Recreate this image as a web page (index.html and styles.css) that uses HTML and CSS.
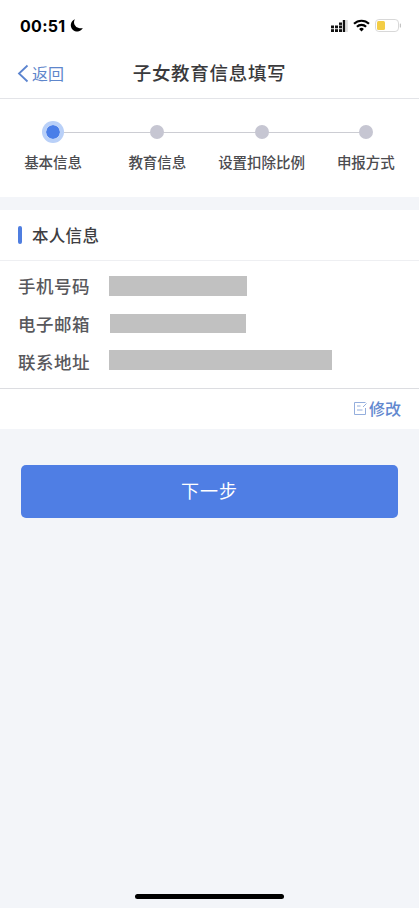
FILE: index.html
```html
<!DOCTYPE html>
<html lang="zh-CN">
<head>
<meta charset="utf-8">
<title>子女教育信息填写</title>
<link rel="stylesheet" href="styles.css">
</head>
<body>
<div class="page">
  <div class="status">
    <div class="time"><span>00:51</span>
      <svg class="moon" width="13" height="13" viewBox="0 0 13 13"><path d="M4.900 .3A6.300 6.300 0 1 0 12.800 8.900 7 7 0 0 1 8.800 9 5.800 5.800 0 0 1 4.900 .3Z" fill="#000"/></svg>
    </div>
    <div class="status-icons">
      <svg class="signal" width="17" height="12" viewBox="0 0 17 12"><g fill="#111"><rect x="0" y="5.500" width="3" height="2.800"/><rect x="0" y="9.200" width="3" height="2.800"/><rect x="4" y="5.500" width="3" height="2.800"/><rect x="4" y="9.200" width="3" height="2.800"/><rect x="8" y="2.500" width="3" height="2.400"/><rect x="8" y="5.500" width="3" height="2.800"/><rect x="8" y="9.200" width="3" height="2.800"/><rect x="11.800" y="0" width="2.400" height="12"/></g><rect x="15" y="0" width="1.800" height="12" fill="#ddd"/></svg>
      <svg width="17" height="13" viewBox="0 0 17 13"><g fill="none" stroke="#000" stroke-width="2.100"><path d="M1 4.800A10.600 10.600 0 0 1 16 4.800"/><path d="M3.900 7.800A6.400 6.400 0 0 1 13.100 7.800"/></g><path d="M6.100 9.900A3.400 3.400 0 0 1 10.900 9.900L8.500 12.500Z" fill="#000"/></svg>
      <svg width="26" height="13" viewBox="0 0 26 13"><rect x=".5" y=".5" width="23" height="12" rx="3.400" fill="#fff" stroke="#d8d8d8"/><rect x="2" y="2" width="8" height="9" rx="1.500" fill="#f3cd45"/><rect x="24.800" y="4.500" width="1.200" height="4" rx=".6" fill="#c4c4c4"/></svg>
    </div>
  </div>

  <header class="nav">
    <a class="back">
      <svg width="13" height="19" viewBox="0 0 13 19"><path d="M11.500 1.500 3 9.500l8.500 8" fill="none" stroke="#5b84cf" stroke-width="1.800"/></svg>
      <span>返回</span>
    </a>
    <h1 class="nav-title">子女教育信息填写</h1>
  </header>

  <section class="stepper">
    <div class="step active"><i class="dot"></i><span>基本信息</span></div>
    <div class="step"><i class="dot"></i><span>教育信息</span></div>
    <div class="step"><i class="dot"></i><span>设置扣除比例</span></div>
    <div class="step"><i class="dot"></i><span>申报方式</span></div>
  </section>

  <section class="card">
    <h2 class="card-title">本人信息</h2>
    <div class="rows">
      <div class="row"><span class="label">手机号码</span><i class="mask mask-phone"></i></div>
      <div class="row"><span class="label">电子邮箱</span><i class="mask mask-mail"></i></div>
      <div class="row"><span class="label">联系地址</span><i class="mask mask-addr"></i></div>
    </div>
    <div class="edit-row">
      <svg width="15" height="15" viewBox="0 0 15 15"><path d="M12.500 1.500H1.500V13.500H12.500V7M4 5H7.500M4 9H9.500M13.500 2.500 10 6" fill="none" stroke="#94aedd" stroke-width="1"/></svg>
      <span>修改</span>
    </div>
  </section>

  <button class="next">下一步</button>

  <div class="home"></div>
</div>
</body>
</html>
```
FILE: styles.css
```css
* { box-sizing: border-box; }
html, body { margin: 0; padding: 0; }
body {
  width: 419px;
  height: 908px;
  overflow: hidden;
  background: #f3f5f9;
  font-family: "Noto Sans CJK SC", "Noto Sans", sans-serif;
}
.page {
  height: 908px;
  display: flex;
  flex-direction: column;
}
.status {
  height: 50px;
  background: #fff;
  display: flex;
  justify-content: space-between;
  align-items: center;
  padding: 1px 18px 0 20px;
}
.time {
  display: flex;
  align-items: center;
  gap: 4px;
  font: 700 16px/20px Inter, sans-serif;
  letter-spacing: .3px;
  color: #000;
}
.status-icons {
  display: flex;
  align-items: center;
  gap: 5px;
}
.nav {
  height: 49px;
  background: #fff;
  border-bottom: 1px solid #e3e4e8;
  display: grid;
  grid-template-columns: 1fr auto 1fr;
  align-items: center;
  padding: 0 16px 2px;
}
.back {
  grid-column: 1;
  display: flex;
  align-items: center;
  gap: 3px;
  color: #5e86cb;
  font-size: 16px;
  line-height: 20px;
}
.nav-title {
  grid-column: 2;
  margin: 0 0 2px;
  font-size: 18.500px;
  font-weight: 500;
  line-height: 24px;
  letter-spacing: .7px;
  color: #3a3a3c;
}
.stepper {
  height: 98px;
  background: #fff;
  display: flex;
  padding: 23px 1px 0;
}
.step {
  flex: 1;
  position: relative;
  display: flex;
  flex-direction: column;
  align-items: center;
  gap: 10px;
}
.step:not(:last-child)::before {
  content: "";
  position: absolute;
  top: 10px;
  left: 50%;
  width: 100%;
  height: 1px;
  background: #cccdd3;
}
.dot {
  position: relative;
  width: 20px;
  height: 20px;
  padding: 3px;
  background-clip: content-box;
  background-color: #c6c6d2;
  border-radius: 50%;
}
.active .dot {
  width: 22px;
  height: 22px;
  margin: -1px;
  padding: 4px;
  background-color: #4a7ee8;
  box-shadow: inset 0 0 0 4px #b9d0f8;
}
.step span {
  font-size: 14.500px;
  font-weight: 500;
  line-height: 20px;
  color: #4c4c50;
  white-space: nowrap;
}
.card {
  margin-top: 13px;
  background: #fff;
}
.card-title {
  margin: 0;
  height: 51px;
  border-bottom: 1px solid #eeeff2;
  display: flex;
  align-items: center;
  padding-left: 18px;
  font-size: 16.500px;
  font-weight: 500;
  line-height: 22px;
  letter-spacing: .3px;
  color: #3e3e42;
}
.card-title::before {
  content: "";
  width: 4px;
  height: 18px;
  margin-right: 10px;
  border-radius: 2px;
  background: #4f7ee0;
}
.rows {
  height: 128px;
  border-bottom: 1px solid #dcdde1;
  padding: 15px 0 0 18px;
  display: flex;
  flex-direction: column;
  gap: 18px;
}
.row {
  height: 20px;
  display: flex;
  align-items: center;
}
.label {
  width: 91px;
  font-size: 17.500px;
  font-weight: 500;
  line-height: 20px;
  letter-spacing: .5px;
  color: #58585c;
  white-space: nowrap;
}
.mask {
  height: 20px;
  background: #c1c1c1;
}
.mask-phone { width: 138px; }
.mask-mail { width: 136px; height: 19px; margin-left: 1px; align-self: flex-start; }
.mask-addr { width: 223px; margin-top: -4px; }
.edit-row {
  height: 40px;
  display: flex;
  justify-content: flex-end;
  align-items: center;
  gap: 1px;
  padding: 0 18px 2px 0;
  color: #6288cf;
  font-size: 16px;
  font-weight: 500;
  line-height: 20px;
}
.next {
  margin: 36px 21px 0;
  height: 53px;
  border: 0;
  border-radius: 5px;
  padding: 0 0 3px;
  background: #4f7ee4;
  color: #fff;
  font-family: inherit;
  font-size: 18px;
  font-weight: 400;
  letter-spacing: 1px;
}
.home {
  width: 149px;
  height: 5px;
  margin: auto auto 9px;
  border-radius: 3px;
  background: #000;
}
```
